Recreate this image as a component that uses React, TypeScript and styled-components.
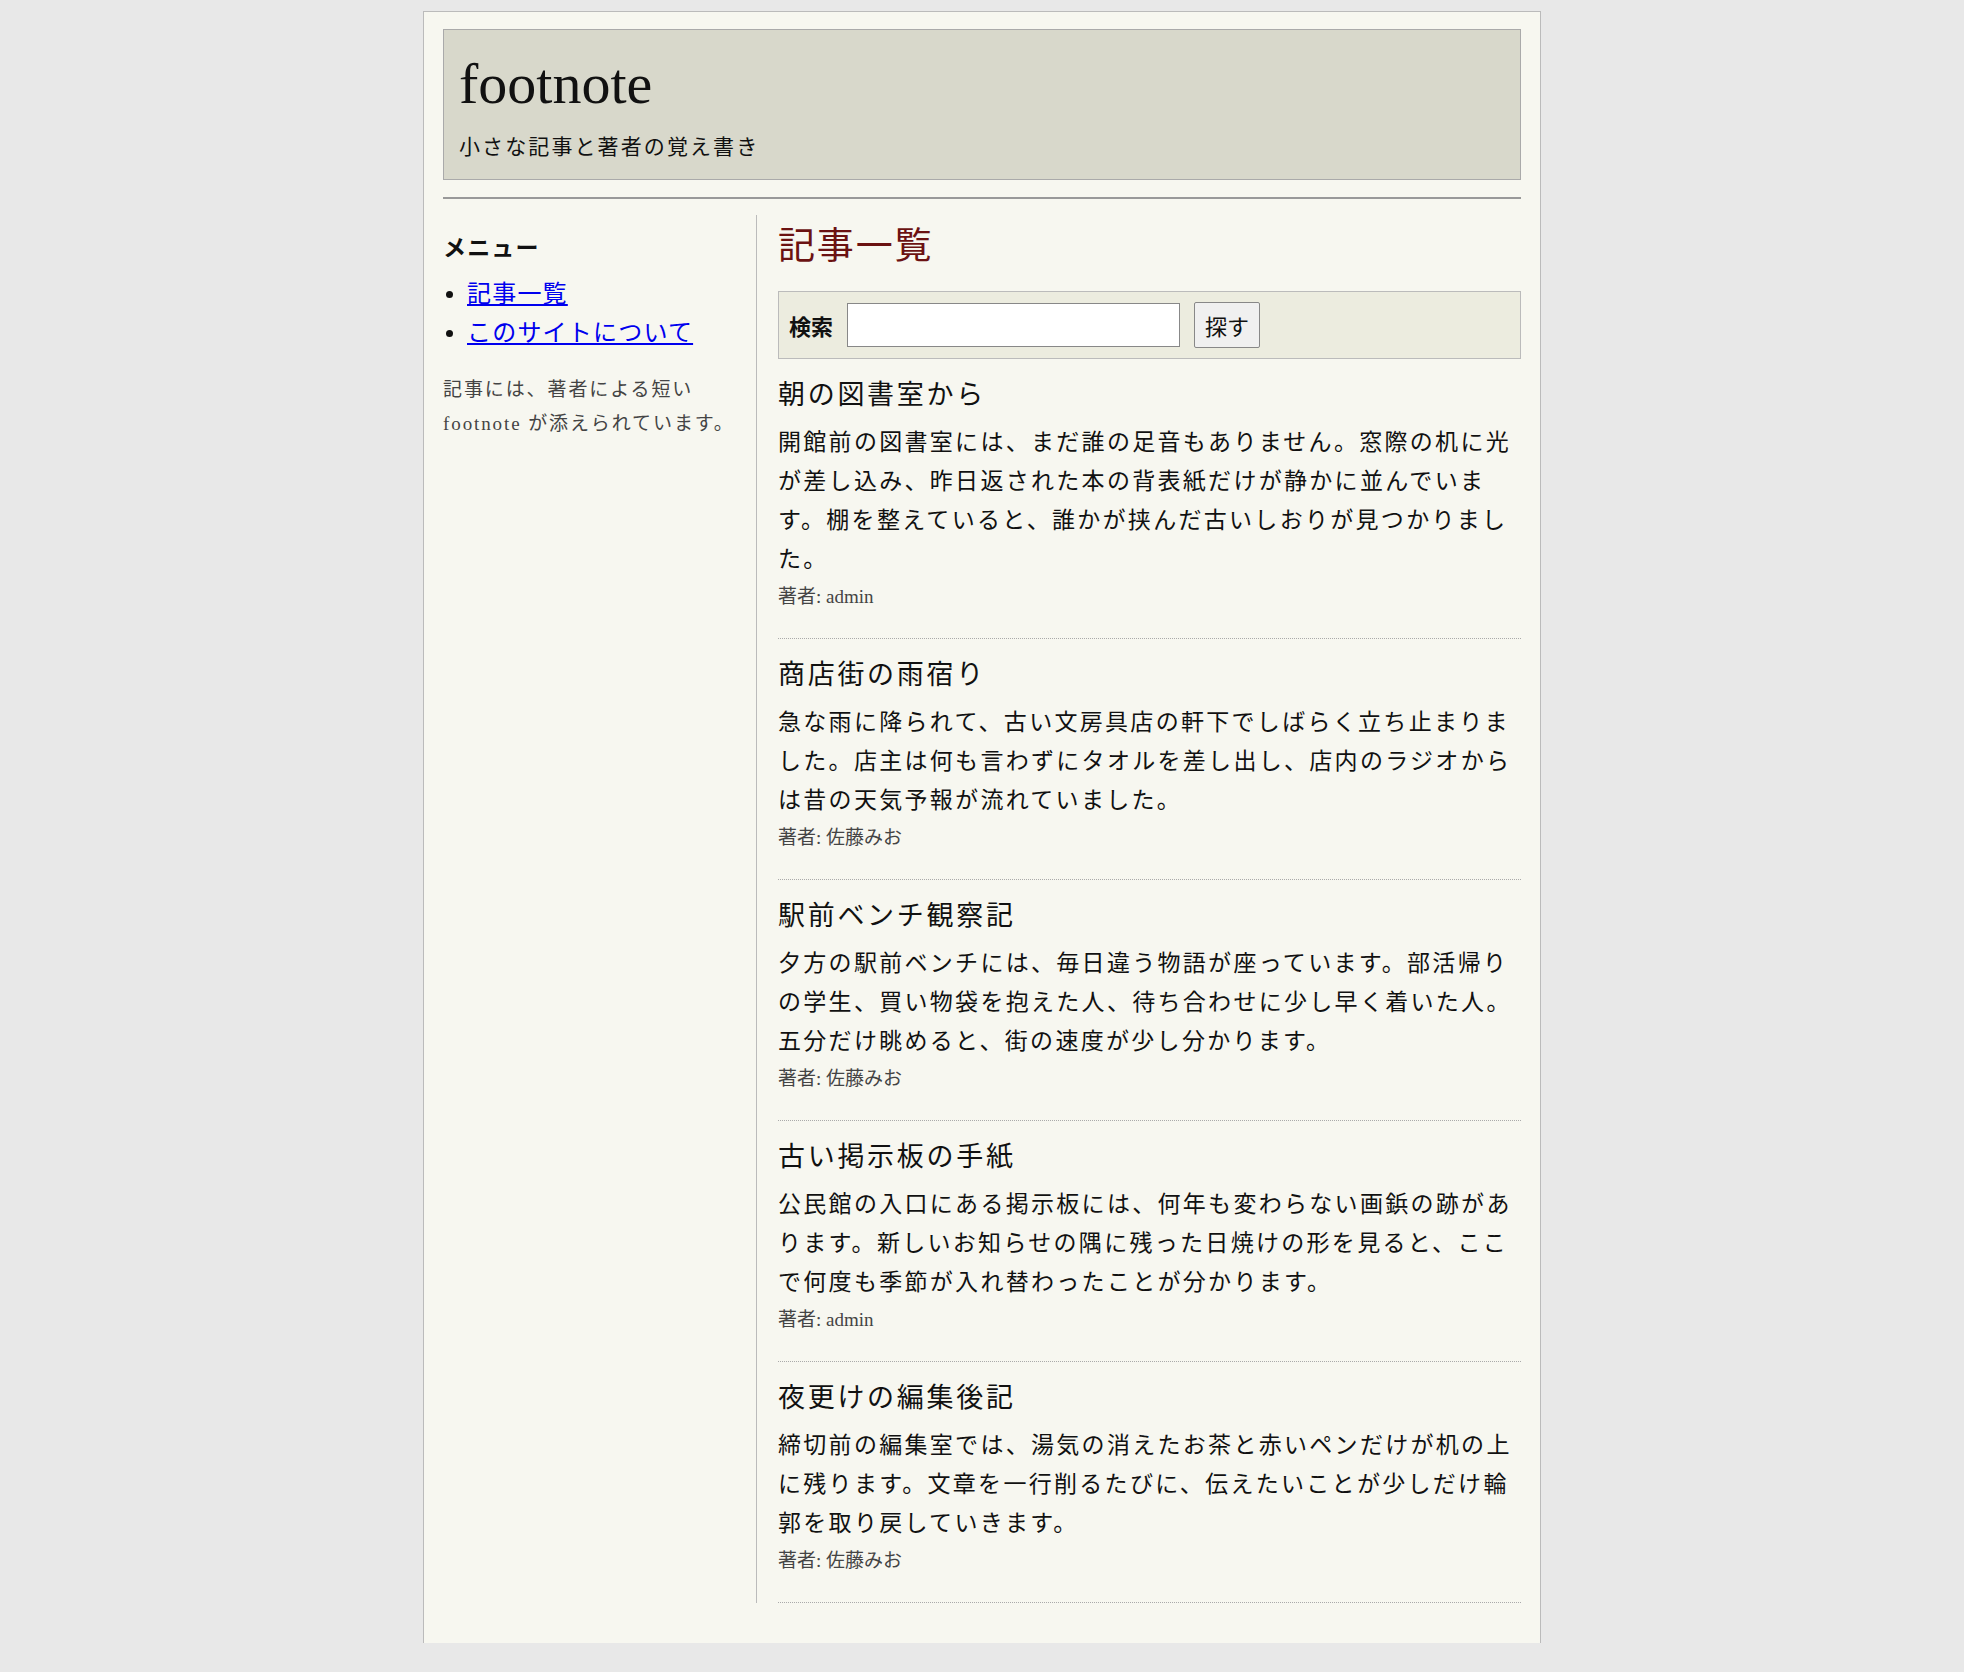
import React from 'react';
import styled, { createGlobalStyle } from 'styled-components';

const Global = createGlobalStyle`
  html, body {
    margin: 0;
    background: #e8e8e8;
    font-family: "Liberation Serif", "Noto Sans CJK JP", serif;
    color: #111;
  }
`;

const Page = styled.div`
  width: 1118px;
  box-sizing: border-box;
  margin: 11px auto 0;
  padding: 17px 19px 40px;
  background: #f7f7f0;
  border: 1px solid #bbb;
  border-bottom: none;
`;

const Header = styled.header`
  height: 151px;
  box-sizing: border-box;
  background: #d8d8cb;
  border: 1px solid #aaa;
  padding: 22px 15px 0;
`;

const Logo = styled.h1`
  margin: 0;
  font-size: 58px;
  font-weight: normal;
  line-height: 64px;
`;

const Tagline = styled.p`
  margin: 14px 0 0;
  font-size: 21px;
  letter-spacing: 0.1em;
`;

const Rule = styled.hr`
  margin: 17px 0 0;
  border: none;
  border-top: 2px solid #999;
`;

const Columns = styled.div`
  display: grid;
  grid-template-columns: 313px 1fr;
  margin-top: 16px;
`;

const Side = styled.aside`
  padding-top: 14px;
`;

const SideTitle = styled.h3`
  margin: 0 0 12px;
  font-size: 23px;
  font-weight: bold;
  letter-spacing: 0.05em;
`;

const Menu = styled.ul`
  margin: 0;
  padding-left: 24px;
  font-size: 24px;
  line-height: 39px;
  letter-spacing: 0.05em;

  a {
    color: #0000ee;
  }
`;

const Note = styled.p`
  margin: 20px 0 0;
  font-size: 19px;
  line-height: 34px;
  color: #444;
  letter-spacing: 0.1em;
`;

const Main = styled.main`
  border-left: 1px solid #bbb;
  padding-left: 21px;
`;

const PageTitle = styled.h2`
  margin: 10px 0 0;
  font-size: 37px;
  font-weight: normal;
  color: #6b1212;
  line-height: 44px;
  letter-spacing: 0.05em;
`;

const Search = styled.form`
  display: flex;
  align-items: center;
  gap: 14px;
  margin-top: 22px;
  height: 68px;
  box-sizing: border-box;
  padding: 0 10px;
  background: #ececdf;
  border: 1px solid #bbb;
`;

const SearchLabel = styled.label`
  font-size: 22px;
  font-weight: bold;
`;

const SearchInput = styled.input`
  width: 333px;
  height: 44px;
  box-sizing: border-box;
  border: 1px solid #888;
  background: #fff;
`;

const SearchButton = styled.button`
  height: 46px;
  padding: 0 10px;
  font-family: inherit;
  font-size: 22px;
  background: #f0f0f0;
  border: 1px solid #888;
  border-radius: 2px;
  color: #111;
`;

const Article = styled.article`
  padding: 18px 0 26px;
  border-bottom: 1px dotted #aaa;
`;

const ArticleTitle = styled.h3`
  margin: 0;
  font-size: 27px;
  font-weight: normal;
  line-height: 36px;
  letter-spacing: 0.1em;
`;

const Body = styled.p`
  margin: 10px 0 0;
  font-size: 23px;
  line-height: 39px;
  letter-spacing: 0.1em;
`;

const Meta = styled.p`
  margin: 3px 0 0;
  font-size: 19px;
  color: #444;
  line-height: 30px;
`;

const articles = [
  {
    title: '朝の図書室から',
    body: '開館前の図書室には、まだ誰の足音もありません。窓際の机に光が差し込み、昨日返された本の背表紙だけが静かに並んでいます。棚を整えていると、誰かが挟んだ古いしおりが見つかりました。',
    author: 'admin',
  },
  {
    title: '商店街の雨宿り',
    body: '急な雨に降られて、古い文房具店の軒下でしばらく立ち止まりました。店主は何も言わずにタオルを差し出し、店内のラジオからは昔の天気予報が流れていました。',
    author: '佐藤みお',
  },
  {
    title: '駅前ベンチ観察記',
    body: '夕方の駅前ベンチには、毎日違う物語が座っています。部活帰りの学生、買い物袋を抱えた人、待ち合わせに少し早く着いた人。五分だけ眺めると、街の速度が少し分かります。',
    author: '佐藤みお',
  },
  {
    title: '古い掲示板の手紙',
    body: '公民館の入口にある掲示板には、何年も変わらない画鋲の跡があります。新しいお知らせの隅に残った日焼けの形を見ると、ここで何度も季節が入れ替わったことが分かります。',
    author: 'admin',
  },
  {
    title: '夜更けの編集後記',
    body: '締切前の編集室では、湯気の消えたお茶と赤いペンだけが机の上に残ります。文章を一行削るたびに、伝えたいことが少しだけ輪郭を取り戻していきます。',
    author: '佐藤みお',
  },
];

export default function App() {
  return (
    <>
      <Global />
      <Page>
        <Header>
          <Logo>footnote</Logo>
          <Tagline>小さな記事と著者の覚え書き</Tagline>
        </Header>
        <Rule />
        <Columns>
          <Side>
            <SideTitle>メニュー</SideTitle>
            <Menu>
              <li><a href="#">記事一覧</a></li>
              <li><a href="#">このサイトについて</a></li>
            </Menu>
            <Note>記事には、著者による短い footnote が添えられています。</Note>
          </Side>
          <Main>
            <PageTitle>記事一覧</PageTitle>
            <Search onSubmit={(e) => e.preventDefault()}>
              <SearchLabel>検索</SearchLabel>
              <SearchInput type="text" />
              <SearchButton type="submit">探す</SearchButton>
            </Search>
            {articles.map((a) => (
              <Article key={a.title}>
                <ArticleTitle>{a.title}</ArticleTitle>
                <Body>{a.body}</Body>
                <Meta>著者: {a.author}</Meta>
              </Article>
            ))}
          </Main>
        </Columns>
      </Page>
    </>
  );
}
